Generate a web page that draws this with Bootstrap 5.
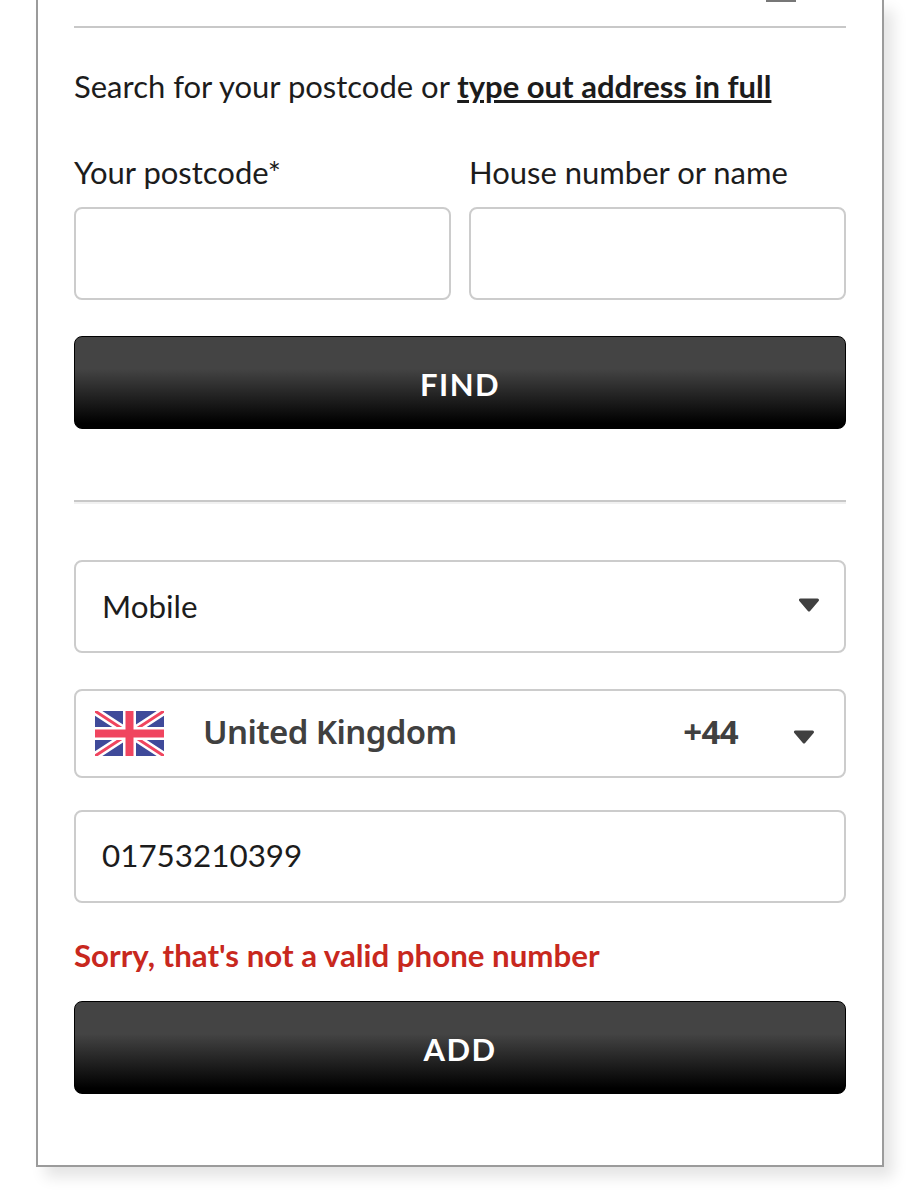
<!DOCTYPE html>
<html lang="en">

<head>
    <meta charset="UTF-8">
    <meta name="viewport" content="width=device-width, initial-scale=1.0">
    <title>Add address</title>
    <link href="https://cdn.jsdelivr.net/npm/bootstrap@5.3.0/dist/css/bootstrap.min.css" rel="stylesheet">
    <style>
        body {
            background-color: #fff;
            font-family: Lato, "Liberation Sans", sans-serif;
            color: #1c1c1c;
        }

        .panel-box {
            width: 848px;
            height: 1167px;
            margin-left: 36px;
            padding: 0 36px;
            border: solid #9b9b9b;
            border-width: 0 2px 2px 2px;
            background-color: #fff;
            box-shadow: 9px 10px 14px rgba(0, 0, 0, 0.11);
        }

        .top-strip {
            height: 26px;
        }

        .menu-stub {
            width: 30px;
            height: 2px;
            margin-right: 50px;
            background-color: #777;
        }

        .rule-line {
            height: 2px;
            background-color: #c8c8c8;
        }

        .search-line {
            margin-top: 39px;
            font-size: 31px;
            line-height: 38px;
        }

        .search-line a {
            color: #1c1c1c;
            font-weight: 700;
        }

        .field-row {
            margin-top: 48px;
            gap: 18px;
        }

        .field-label {
            font-size: 31px;
            line-height: 38px;
            margin-bottom: 16px;
        }

        .form-control.tall-input,
        .form-select.tall-input {
            height: 93px;
            border: 2px solid #ccc;
            border-radius: 8px;
            font-size: 31.400px;
            color: #1c1c1c;
            padding-left: 26px;
        }

        .form-select.tall-input {
            background-image: url("data:image/svg+xml,%3Csvg xmlns='http://www.w3.org/2000/svg' viewBox='0 0 22 14'%3E%3Cpath d='M2.500 2h17L11 12z' fill='%23404040' stroke='%23404040' stroke-width='3' stroke-linejoin='round'/%3E%3C/svg%3E");
            background-size: 22px 14px;
            background-position: right 24px top 36px;
        }

        .dark-btn {
            height: 93px;
            padding-top: 10px;
            border: 1px solid #000;
            border-radius: 8px;
            background: linear-gradient(#444 0, #444 35%, #000 95%);
            color: #fff;
            font-size: 31px;
            font-weight: 700;
            letter-spacing: 1.500px;
        }

        .dark-btn:hover {
            background: linear-gradient(#444 0, #444 35%, #000 95%);
            color: #fff;
        }

        .find-btn {
            margin-top: 36px;
        }

        .lower-rule {
            margin-top: 71px;
            box-shadow: 0 2px 0 #f1f1f1;
        }

        .phone-type {
            margin-top: 58px;
        }

        .country-box {
            height: 89px;
            margin-top: 36px;
            border: 2px solid #ccc;
            border-radius: 8px;
            padding: 0 29px 0 19px;
            font-family: "Noto Sans", sans-serif;
            font-size: 33px;
            letter-spacing: -0.600px;
            font-weight: 600;
            color: #404040;
        }

        .country-name {
            padding-bottom: 4px;
        }

        .flag-pic {
            width: 69px;
            height: 45px;
            margin-right: 39px;
        }

        .dial-code {
            margin-right: 55px;
            padding-bottom: 4px;
            font-weight: 700;
        }

        .country-arrow {
            margin-top: 6px;
        }

        .form-control.phone-input {
            margin-top: 32px;
            padding-bottom: 9px;
        }

        .error-line {
            margin-top: 33px;
            font-size: 31.250px;
            line-height: 38px;
            font-weight: 700;
            color: #c8281e;
        }

        .add-btn {
            margin-top: 27px;
        }
    </style>
</head>

<body class="min-vh-100">
    <div class="panel-box">
        <div class="top-strip d-flex justify-content-end">
            <div class="menu-stub"></div>
        </div>
        <div class="rule-line"></div>

        <p class="search-line mb-0">Search for your postcode or <a href="#">type out address in full</a></p>

        <div class="field-row d-flex">
            <div class="flex-fill w-50">
                <label class="field-label d-block" for="postcode">Your postcode*</label>
                <input type="text" id="postcode" class="form-control tall-input">
            </div>
            <div class="flex-fill w-50">
                <label class="field-label d-block" for="house">House number or name</label>
                <input type="text" id="house" class="form-control tall-input">
            </div>
        </div>

        <button class="btn dark-btn w-100 find-btn" type="button">FIND</button>

        <div class="rule-line lower-rule"></div>

        <select class="form-select tall-input phone-type">
            <option>Mobile</option>
        </select>

        <div class="country-box d-flex align-items-center">
            <svg class="flag-pic" viewBox="0 0 69 45">
                <rect width="69" height="45" fill="#3f4a9a" />
                <path d="M0 0L69 45M69 0L0 45" stroke="#fff" stroke-width="8" />
                <path d="M0 0L69 45M69 0L0 45" stroke="#f0455f" stroke-width="3" />
                <path d="M34.500 0V45M0 22.500H69" stroke="#fff" stroke-width="13" />
                <path d="M34.500 0V45M0 22.500H69" stroke="#f0455f" stroke-width="8" />
            </svg>
            <span class="country-name flex-grow-1">United Kingdom</span>
            <span class="dial-code">+44</span>
            <svg class="country-arrow" width="22" height="14" viewBox="0 0 22 14">
                <path d="M2.500 2h17L11 12z" fill="#404040" stroke="#404040" stroke-width="3" stroke-linejoin="round" />
            </svg>
        </div>

        <input type="text" class="form-control tall-input phone-input" value="01753210399">

        <p class="error-line mb-0">Sorry, that's not a valid phone number</p>

        <button class="btn dark-btn w-100 add-btn" type="button">ADD</button>
    </div>

    <script src="https://cdn.jsdelivr.net/npm/bootstrap@5.3.0/dist/js/bootstrap.bundle.min.js"></script>
</body>

</html>
